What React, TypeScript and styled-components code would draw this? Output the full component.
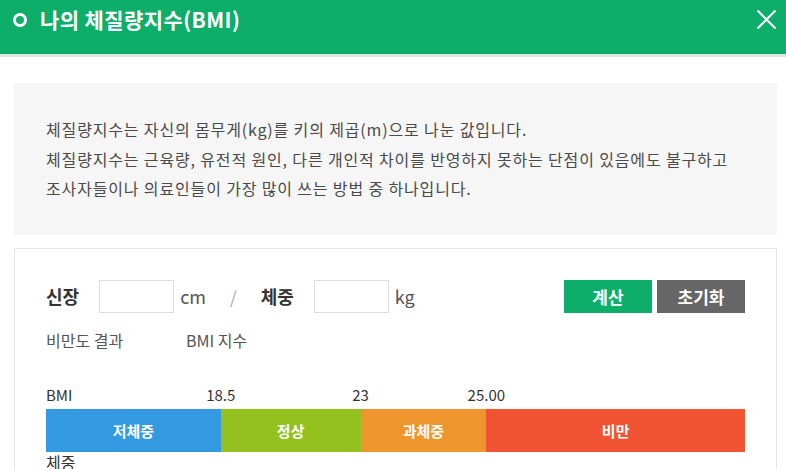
import styled, { createGlobalStyle } from 'styled-components'

const GlobalStyle = createGlobalStyle`
    html, body {
        margin: 0;
        padding: 0;
        background: #ffffff;
        overflow: hidden;
    }
    body {
        font-family: 'Noto Sans CJK KR', 'Noto Sans', sans-serif;
        color: #444444;
    }
    * {
        box-sizing: border-box;
    }
`

const GREEN = '#0cae6a'

const segments = [
    { label: '저체중', color: '#3399e0', width: 25, tick: '18.5' },
    { label: '정상', color: '#95c11f', width: 20, tick: '23' },
    { label: '과체중', color: '#ef952e', width: 18, tick: '25.00' },
    { label: '비만', color: '#f15433', width: 37, tick: '' },
]

const columns = segments.map(s => `${s.width}%`).join(' ')

const Page = styled.div`
    width: 786px;
    height: 469px;
    overflow: hidden;
`

const Header = styled.header`
    display: flex;
    align-items: center;
    height: 57px;
    padding: 0 9px 15px 13px;
    background: ${GREEN};
    border-bottom: 3px solid #e4e4e4;
`

const TitleMark = styled.span`
    flex-shrink: 0;
    display: block;
    width: 14px;
    height: 14px;
    border: 3px solid #ffffff;
    border-radius: 50%;
`

const Title = styled.h1`
    flex: 1;
    margin: 0 0 0 13px;
    color: #ffffff;
    font-size: 21px;
    font-weight: 700;
    letter-spacing: 0.4px;
    line-height: 1;
`

const CloseButton = styled.button`
    display: flex;
    padding: 0;
    border: 0;
    background: none;
    cursor: pointer;
`

const Content = styled.main`
    padding: 26px 9px 0 14px;
`

const InfoBox = styled.div`
    padding: 32px 20px 31px 32px;
    background: #f6f6f6;
    font-size: 16px;
    line-height: 29.5px;
    color: #4a4a4a;
    letter-spacing: 0.85px;
    white-space: nowrap;
`

const CalcBox = styled.section`
    margin-top: 13px;
    padding: 31px 31px 0;
    border: 1px solid #e6e6e6;
    border-bottom: 0;
`

const InputRow = styled.div`
    display: flex;
    align-items: center;
    height: 33px;
`

const FieldLabel = styled.strong`
    font-size: 18px;
    font-weight: 700;
    color: #333333;
    margin-right: 20px;
`

const NumberInput = styled.input`
    width: 75px;
    height: 33px;
    border: 1px solid #dddddd;
    background: #ffffff;
    outline: none;
`

const Unit = styled.span`
    margin-left: 6px;
    font-size: 18px;
    color: #555555;
`

const Slash = styled.span`
    margin: 0 24px;
    font-size: 17px;
    color: #aaaaaa;
`

const ButtonGroup = styled.div`
    display: flex;
    gap: 5px;
    margin-left: auto;
`

const ActionButton = styled.button<{ $bg: string }>`
    width: 88px;
    height: 33px;
    border: 0;
    background: ${p => p.$bg};
    color: #ffffff;
    font-family: inherit;
    font-size: 17px;
    font-weight: 700;
    cursor: pointer;
`

const ResultRow = styled.div`
    display: flex;
    margin-top: 15px;
    font-size: 16px;
    line-height: 24px;
    color: #555555;
`

const ResultLabel = styled.span`
    width: 140px;
`

const ScaleRow = styled.div`
    display: grid;
    grid-template-columns: ${columns};
    margin-top: 33px;
    font-size: 15px;
    line-height: 20px;
    color: #333333;
`

const ScaleCell = styled.div<{ $first?: boolean }>`
    display: flex;
    justify-content: ${p => (p.$first ? 'space-between' : 'flex-end')};
`

const Tick = styled.span`
    transform: translateX(50%);
`

const Bar = styled.div`
    display: grid;
    grid-template-columns: ${columns};
    height: 43px;
    margin-top: 4px;
`

const Segment = styled.div<{ $color: string }>`
    display: flex;
    align-items: center;
    justify-content: center;
    background: ${p => p.$color};
    color: #ffffff;
    font-size: 15px;
    font-weight: 700;
`

const WeightLabel = styled.div`
    margin-top: 1px;
    font-size: 16px;
    line-height: 18px;
    color: #333333;
`

export default function App() {
    return (
        <Page>
            <GlobalStyle />
            <Header>
                <TitleMark />
                <Title>나의 체질량지수(BMI)</Title>
                <CloseButton aria-label="닫기">
                    <svg width="21" height="21" viewBox="0 0 21 21">
                        <path d="M1.5 1.5 L19.5 19.5 M19.5 1.5 L1.5 19.5" stroke="#ffffff" strokeWidth="2" fill="none" />
                    </svg>
                </CloseButton>
            </Header>
            <Content>
                <InfoBox>
                    체질량지수는 자신의 몸무게(kg)를 키의 제곱(m)으로 나눈 값입니다.<br />
                    체질량지수는 근육량, 유전적 원인, 다른 개인적 차이를 반영하지 못하는 단점이 있음에도 불구하고<br />
                    조사자들이나 의료인들이 가장 많이 쓰는 방법 중 하나입니다.
                </InfoBox>
                <CalcBox>
                    <InputRow>
                        <FieldLabel>신장</FieldLabel>
                        <NumberInput type="text" />
                        <Unit>cm</Unit>
                        <Slash>/</Slash>
                        <FieldLabel>체중</FieldLabel>
                        <NumberInput type="text" />
                        <Unit>kg</Unit>
                        <ButtonGroup>
                            <ActionButton $bg={GREEN}>계산</ActionButton>
                            <ActionButton $bg="#666666">초기화</ActionButton>
                        </ButtonGroup>
                    </InputRow>
                    <ResultRow>
                        <ResultLabel>비만도 결과</ResultLabel>
                        <span>BMI 지수</span>
                    </ResultRow>
                    <ScaleRow>
                        {segments.map((s, i) => (
                            <ScaleCell key={s.label} $first={i === 0}>
                                {i === 0 && <span>BMI</span>}
                                {s.tick && <Tick>{s.tick}</Tick>}
                            </ScaleCell>
                        ))}
                    </ScaleRow>
                    <Bar>
                        {segments.map(s => (
                            <Segment key={s.label} $color={s.color}>
                                {s.label}
                            </Segment>
                        ))}
                    </Bar>
                    <WeightLabel>체중</WeightLabel>
                </CalcBox>
            </Content>
        </Page>
    )
}
